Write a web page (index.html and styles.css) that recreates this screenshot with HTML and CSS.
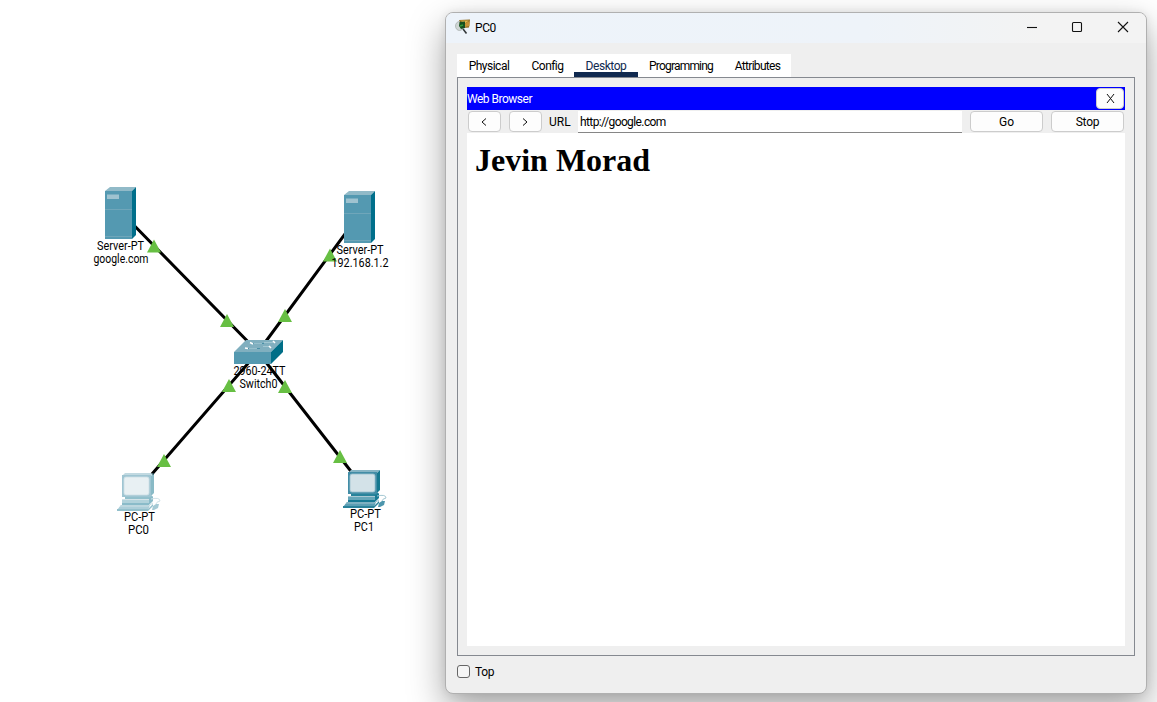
FILE: index.html
```html
<!DOCTYPE html>
<html lang="en">
<head>
<meta charset="utf-8">
<title>PC0</title>
<link rel="stylesheet" href="styles.css">
</head>
<body>
<main class="workspace">
<svg class="topology" viewBox="0 0 445 702" aria-label="Network topology">
  <defs>
    <symbol id="server" viewBox="0 0 32 52">
      <path d="M0 4 5 0H31L27 4Z" fill="#91bac8"/>
      <path d="M27 4 31 0V48L27 52Z" fill="#006f8b"/>
      <path d="M0 4H27V52H0Z" fill="#5499b1"/>
      <path d="M2 7.500H14V12H2Z" fill="#9fc3d0"/>
      <path d="M0 22.500H27M0 49.500H27" stroke="#76aabd" stroke-width=".8"/>
    </symbol>
    <symbol id="pc" viewBox="0 0 46 39">
      <path d="M5 3 8 0H37L34 3Z" fill="#85b4c4"/>
      <path d="M34 3 37 0V20L33 24H31Z" fill="#15788f"/>
      <path d="M5 2H34V24H5Z" fill="#428da6"/>
      <rect x="7" y="4" width="25" height="18" rx="2" fill="#d3e2e8" stroke="#9dc0ce" stroke-width=".8"/>
      <path d="M8 24H33L35 22V26L33 28H8Z" fill="#28839b"/>
      <path d="M5 26H31L36 23V28L32 32H5Z" fill="#187a94"/>
      <path d="M5 26H32V30H5Z" fill="#65a6b9"/>
      <path d="M5 26.500H32" fill="none" stroke="#a8c8d3"/>
      <path d="M4 32 33 32 31 37H0Z" fill="#5c9fb4"/>
      <path d="M3 33H31L36 30" fill="none" stroke="#9fc2ce"/>
      <path d="M0 36H31L36 31V33L31 38H0Z" fill="#2a829a"/>
      <path d="M34 26Q43 24 43 28Q39 29 39 31" fill="none" stroke="#a4c8d3"/>
      <path d="M36 33 39 31H42L41 35 37 37H35Z" fill="#4d96ad"/>
    </symbol>
    <path id="up" d="M0-6.500 7 6.500H-7Z" fill="#67bf43"/>
  </defs>
  <g class="links">
    <path d="M120 211 258 352M359 215 258 352M152 474 258 352M364 488 258 352"/>
  </g>
  <use href="#server" x="105" y="187" width="32" height="52"/>
  <use href="#server" x="344" y="191" width="32" height="52"/>
  <g transform="translate(234 340)">
    <path d="M0 12 12 0H49L37 12Z" fill="#80afbf"/>
    <path d="M37 12 49 0V12L37 24Z" fill="#006e87"/>
    <path d="M0 12H37V24H0Z" fill="#5499b0"/>
    <g fill="none">
      <path d="M18 3.500H30M14 8.500H26" stroke="#488fa6"/>
      <path d="M20 3.500H28M30 2.500H39M15 8.500H23M29 6.500H36" stroke="#aacbd5" stroke-width=".8"/>
      <path d="M16 2.500 19 4M39 1 41 3M11 8 14 8.500M35 6 37 8" stroke="#fff" stroke-width="1.600"/>
    </g>
  </g>
  <use href="#pc" class="faded" x="117" y="473" width="46" height="39"/>
  <use href="#pc" x="343" y="470" width="46" height="39"/>
  <g>
    <use href="#up" x="154" y="246"/><use href="#up" x="330" y="255"/>
    <use href="#up" x="227" y="320.500"/><use href="#up" x="285" y="315.500"/>
    <use href="#up" x="229" y="385.500"/><use href="#up" x="285" y="386.500"/>
    <use href="#up" x="164" y="460.500"/><use href="#up" x="340" y="456.500"/>
  </g>
  <g class="labels">
    <text x="97" y="250" textLength="47" lengthAdjust="spacingAndGlyphs">Server-PT</text>
    <text x="93.500" y="263" textLength="55" lengthAdjust="spacingAndGlyphs">google.com</text>
    <text x="336.500" y="254" textLength="47" lengthAdjust="spacingAndGlyphs">Server-PT</text>
    <text x="331.500" y="267" textLength="57" lengthAdjust="spacingAndGlyphs">192.168.1.2</text>
    <text x="233.500" y="375" textLength="52" lengthAdjust="spacingAndGlyphs">2960-24TT</text>
    <text x="239.500" y="388" textLength="38" lengthAdjust="spacingAndGlyphs">Switch0</text>
    <text x="124" y="521" textLength="31" lengthAdjust="spacingAndGlyphs">PC-PT</text>
    <text x="128" y="534" textLength="21" lengthAdjust="spacingAndGlyphs">PC0</text>
    <text x="350" y="518" textLength="31" lengthAdjust="spacingAndGlyphs">PC-PT</text>
    <text x="354" y="531" textLength="20" lengthAdjust="spacingAndGlyphs">PC1</text>
  </g>
</svg>
<section class="window">
  <header class="titlebar">
    <svg class="app-icon" width="16" height="16" viewBox="0 0 16 16">
      <ellipse cx="4.500" cy="7" rx="4" ry="4.500" fill="#cfd6d4" stroke="#a4aaa9" stroke-width=".7"/>
      <path d="M4 1 15 .5 14 8.500 8 9Z" fill="#8b681f"/>
      <path d="M5 1.500H14L10 4.500Z" fill="#dfb64e"/>
      <path d="M10 4.500 14.500 2V7L10 8Z" fill="#c89336"/>
      <path d="M4.500 3 10 2.500V9L6 10 4 7Z" fill="#174f20"/>
      <path d="M5 7 8 6" stroke="#369a36" stroke-width="1.500"/>
      <path d="M8 10 11.500 14.500" stroke="#34383a" stroke-width="1.600"/>
    </svg>
    <span class="title">PC0</span>
    <svg class="controls" width="104" height="14" viewBox="0 0 104 14">
      <path d="M1 7.500H11"/><rect x="46.500" y="2.500" width="9" height="9" rx="1"/><path d="M92 2 102 12M102 2 92 12"/>
    </svg>
  </header>
  <nav class="tabs">
    <span class="tab physical">Physical</span><span class="tab config">Config</span><span class="tab desktop">Desktop</span><span class="tab programming">Programming</span><span class="tab attributes">Attributes</span>
  </nav>
  <div class="panel">
    <div class="browser">
      <div class="browser-title"><span>Web Browser</span><button class="button close" aria-label="Close"><svg width="9" height="9" viewBox="0 0 9 9"><path d="M1 0 8 9M8 0 1 9"/></svg></button></div>
      <div class="toolbar">
        <button class="button arrow"><svg width="6" height="8" viewBox="0 0 6 8"><path d="M5 .5 1 4 5 7.500"/></svg></button>
        <button class="button arrow forward"><svg width="6" height="8" viewBox="0 0 6 8"><path d="M1 .5 5 4 1 7.500"/></svg></button>
        <span class="url-label">URL</span>
        <span class="url">http://google.com</span>
        <button class="button go">Go</button>
        <button class="button stop">Stop</button>
      </div>
      <article class="page"><h1>Jevin Morad</h1></article>
    </div>
  </div>
  <label class="top-option"><span class="checkbox"></span><span>Top</span></label>
</section>
</main>
</body>
</html>
```
FILE: styles.css
```css
* { box-sizing: border-box; }
body { margin: 0; background: #fff; font: 12px/14px Roboto, "Liberation Sans", sans-serif; color: #000; overflow: hidden; }
.workspace { display: flex; width: 1157px; height: 702px; overflow: hidden; }
.topology { width: 445px; height: 702px; flex: none; }
.links path { stroke: #000; stroke-width: 3; fill: none; }
.faded { opacity: .5; }
.labels { font: 12px Roboto, sans-serif; }
.window { width: 702px; height: 682px; margin-top: 12px; flex: none; display: flex; flex-direction: column; background: #efefef; border: 1px solid #b0b0b0; border-radius: 8px; box-shadow: 0 15px 36px rgba(0,0,0,.36), 0 0 8px rgba(0,0,0,.08); }
.titlebar { height: 30px; flex: none; display: flex; align-items: center; padding: 0 16px 2px 9px; border-radius: 7px 7px 0 0; background: linear-gradient(90deg, #edf3fa 0%, #eef3f9 60%, #f3f3f3 85%); }
.title { margin-left: 4px; padding-top: 2px; font-size: 12px; letter-spacing: -.4px; }
.controls { margin-left: auto; fill: none; stroke: #111; stroke-width: 1.1; }
.tabs { display: flex; flex: none; width: 334px; height: 23px; margin: 11px 0 0 11px; background: #fff; }
.tab { display: flex; justify-content: center; align-items: center; height: 23px; padding-top: 1px; font-size: 12px; }
.physical { width: 64px; letter-spacing: -.5px; }
.config { width: 53px; letter-spacing: -.55px; }
.desktop { width: 64px; color: #10294f; border-bottom: 5px solid #10294f; padding-top: 6px; letter-spacing: -.45px; }
.programming { width: 86px; letter-spacing: -.8px; }
.attributes { width: 67px; letter-spacing: -.7px; }
.panel { width: 678px; height: 579px; flex: none; margin-left: 11px; padding: 9px; border: 1px solid #858990; }
.browser { width: 658px; height: 559px; display: flex; flex-direction: column; }
.browser-title { height: 23px; flex: none; display: flex; align-items: center; justify-content: space-between; padding-right: 1px; background: #00f; color: #fff; font-size: 12px; letter-spacing: -.5px; }
.button { display: flex; align-items: center; justify-content: center; height: 21px; padding: 0; border: 1px solid #ccc; border-radius: 4px; background: #fdfdfd; font: 12px Roboto, sans-serif; color: #000; }
.button svg { fill: none; stroke: #111; stroke-width: 1; }
.close { width: 28px; }
.toolbar { height: 23px; flex: none; display: flex; align-items: flex-start; padding: 1px 1px 0; }
.arrow { width: 33px; }
.arrow svg { margin-right: 1px; }
.forward { margin-left: 8px; }
.url-label { width: 36px; padding: 4px 0 0 7px; font-size: 12px; }
.url { width: 384px; height: 22px; padding: 4px 2px 0; background: #fff; border-bottom: 1px solid #868686; font-size: 12px; letter-spacing: -.6px; }
.go { width: 73px; margin-left: 8px; }
.stop { width: 73px; margin-left: 8px; letter-spacing: -.2px; }
.page { height: 513px; background: #fff; padding: 9px 8px; }
.page h1 { margin: 0; font: bold 32px/37px "Liberation Serif", "Times New Roman", serif; white-space: nowrap; }
.top-option { display: flex; align-items: center; gap: 5px; margin: 8px 0 0 11px; font-size: 12px; letter-spacing: -.3px; }
.top-option span:last-child { padding-top: 1px; }
.checkbox { width: 13px; height: 13px; border: 1px solid #666; border-radius: 3px; background: #f5f5f5; }
```
